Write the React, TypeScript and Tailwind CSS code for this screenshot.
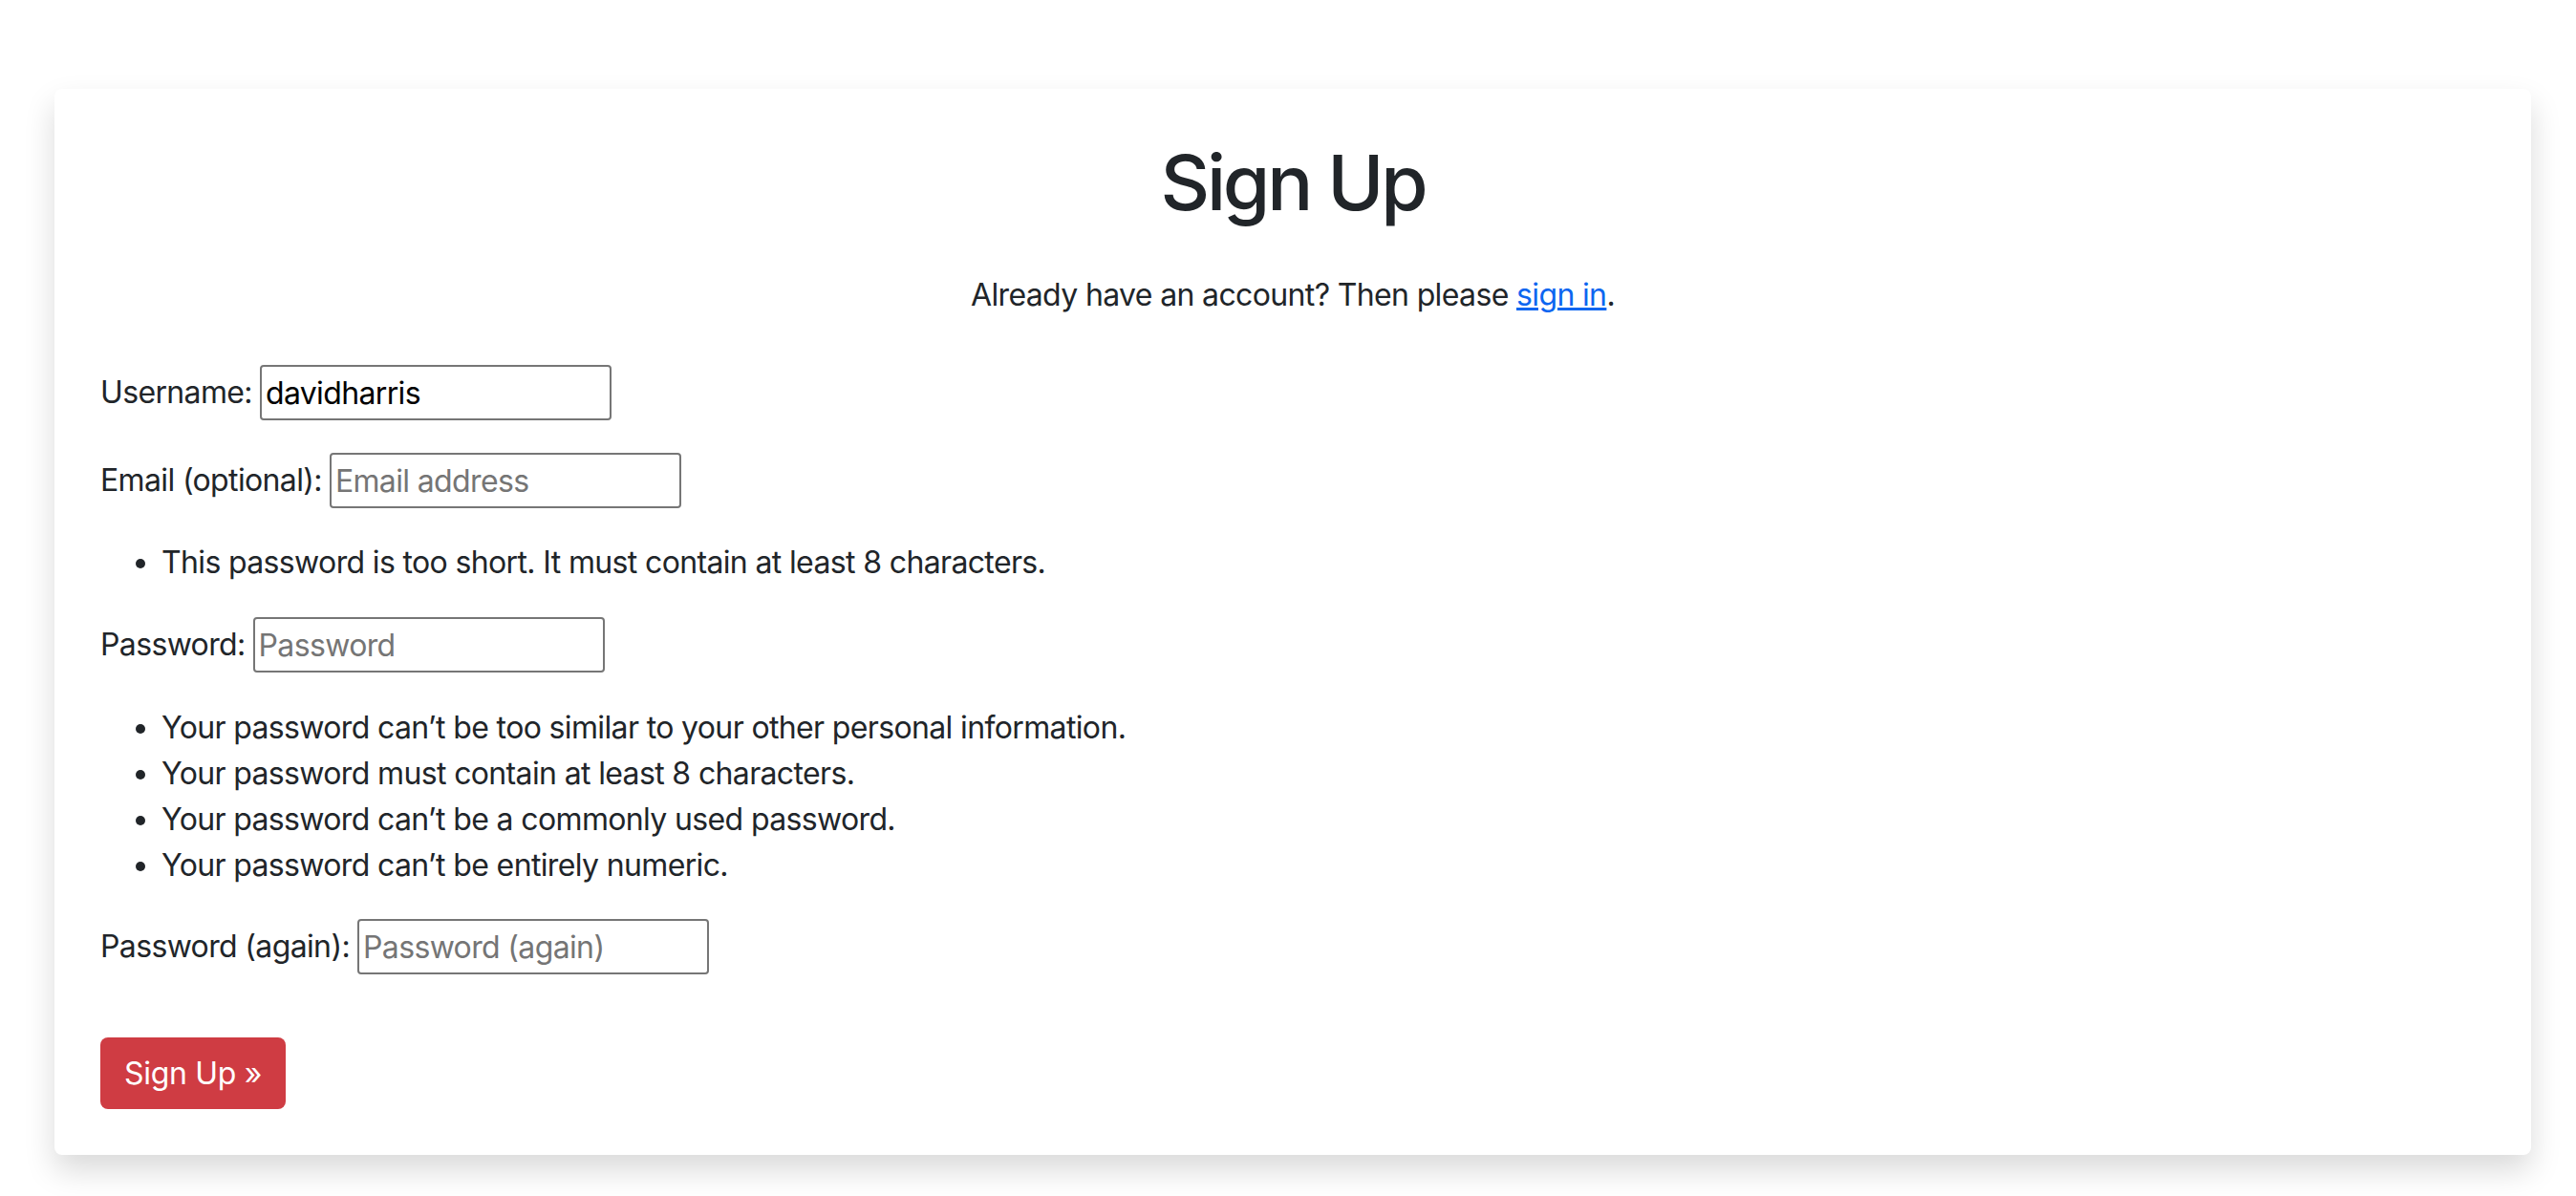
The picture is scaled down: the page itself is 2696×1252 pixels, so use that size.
import React from "react";

const font = { fontFamily: "Inter, 'Noto Sans', sans-serif" };

function Field({ label, placeholder, value }: { label: string; placeholder: string; value?: string }) {
  return (
    <div className="flex items-center h-[58px]">
      <label className="text-[32px] leading-[48px] text-[#212529] tracking-[-0.02em]">{label}</label>
      <input
        type="text"
        defaultValue={value}
        placeholder={placeholder}
        className="ml-[8px] w-[368px] h-[58px] border-2 border-[#767676] rounded-[4px] px-[4px] text-[32px] leading-[48px] tracking-[-0.02em] text-black placeholder:text-[#757575] outline-none bg-white"
      />
    </div>
  );
}

export default function App() {
  return (
    <div className="min-h-[1252px] bg-white pt-[93px] pl-[57px]" style={font}>
      <div className="w-[2592px] h-[1116px] bg-white rounded-[8px] shadow-[0_16px_32px_rgba(0,0,0,0.15)] px-[48px] pt-[50px] text-[#212529]">
        <h1 className="text-[80px] leading-[96px] font-medium text-center tracking-[-0.04em]">Sign Up</h1>
        <p className="mt-[46px] text-[32px] leading-[48px] text-center tracking-[-0.02em]">
          Already have an account? Then please{" "}
          <a href="#" className="text-[#0d66f0] underline">sign in</a>.
        </p>
        <div className="mt-[49px]">
          <Field label="Username:" placeholder="" value="davidharris" />
        </div>
        <div className="mt-[34px]">
          <Field label="Email (optional):" placeholder="Email address" />
        </div>
        <ul className="mt-[33px] list-disc pl-[64px] text-[32px] leading-[48px] tracking-[-0.02em]">
          <li>This password is too short. It must contain at least 8 characters.</li>
        </ul>
        <div className="mt-[33px]">
          <Field label="Password:" placeholder="Password" />
        </div>
        <ul className="mt-[34px] list-disc pl-[64px] text-[32px] leading-[48px] tracking-[-0.02em]">
          <li>Your password can’t be too similar to your other personal information.</li>
          <li>Your password must contain at least 8 characters.</li>
          <li>Your password can’t be a commonly used password.</li>
          <li>Your password can’t be entirely numeric.</li>
        </ul>
        <div className="mt-[32px]">
          <Field label="Password (again):" placeholder="Password (again)" />
        </div>
        <button className="mt-[66px] w-[194px] h-[75px] rounded-[8px] bg-[#cf3c43] text-white text-[32px] leading-[48px] tracking-[-0.01em] text-center">
          Sign Up »
        </button>
      </div>
    </div>
  );
}
